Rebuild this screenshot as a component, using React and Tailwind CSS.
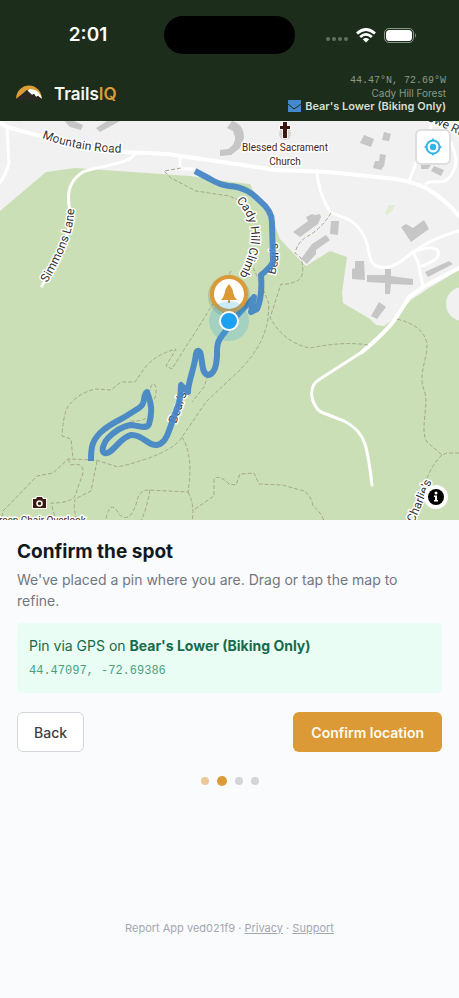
import React from 'react';

const forest = 'M0 211 L46 172 L75 168 L190 176 L232 182 L250 184 L256 196 L268 212 L275 226 L280 239 L294 254 L306 266 L330 251 L347 257 L342 293 L343 303 L370 319 L376 325 L384 326 L395 318 L411 300 L429 288 L459 270 V521 H0 Z';

const roads = [
    'M0 123 L7 127 L40 136 L80 146 L122 152 L167 154 L229 163 L276 170 L329 172 L396 179 Q420 183 434 193 Q448 203 459 216',
    'M459 268 L423 287 L409 297 L396 318 Q386 332 362 352',
];

const smallRoads = [
    'M317 171 C318 190 325 203 330 212 C340 217 349 217 357 226 C372 241 366 262 376 266 C388 271 398 264 412 253 C424 244 440 236 459 231',
    'M7 127 L9 163 Q6 174 0 183',
    'M180 157 V169 H193',
    'M409 181 L420 153 L432 125',
    'M426 184 C432 179 441 184 447 180 C452 175 456 167 456 160 Q454 143 441 128',
    'M413 252 L418 262 L423 287',
    'M413 252 C424 248 435 246 438 251 C441 258 432 262 422 266',
];

const lanes = [
    'M135 153 C132 164 97 166 83 172 C70 180 67 192 69 205 C75 230 60 253 42 286',
    'M396 318 Q386 332 362 352 L320 379 Q312 384 312 391 C310 399 317 410 321 412 L344 421 Q360 429 365 444 Q369 458 372 485',
];

const paths = [
    'M181 168 L164 171 L171 178 L196 191 L229 196 L241 201',
    'M205 174 L220 185 L235 188',
    'M331 213 Q321 229 308 236 Q298 241 295 253 L301 258 Q306 276 297 281 Q288 285 281 284 L270 318 L274 324 Q288 344 310 348 Q344 341 368 345',
    'M231 271 L216 299 L203 320 L187 345 L172 369 L166 366 L176 349 Q154 355 144 369 L135 382 L121 382 L111 390 L96 389 Q77 393 67 408 Q63 418 62 436 L71 439 L73 459',
    'M250 262 Q262 285 269 304 L268 318 Q264 350 229 380 L206 402 L182 437 Q172 454 118 467 L96 460 L68 459 L53 473 L37 476 L3 511 L1 521',
    'M68 459 L71 465 Q84 462 83 473 L75 496 Q71 503 51 503 L56 521',
    'M97 461 L91 491 L75 499 Q73 508 77 521',
    'M182 437 C193 455 190 478 188 492 L149 490 Q139 490 137 501 C132 520 124 520 119 514 Q110 498 106 519',
    'M188 492 Q195 505 192 521',
    'M150 490 Q147 508 141 521',
    'M195 509 L214 496 L214 479 Q219 474 229 484 L236 485 L240 474 L254 473 L259 484 L282 485 L304 491 Q311 495 313 506 Q321 512 324 521',
    'M149 394 Q152 378 156 387 Q157 398 151 403',
    'M150 414 Q146 422 129 421',
    'M208 375 L204 387 L192 402',
    'M397 319 Q425 326 427 345 C427 360 418 375 424 390 C430 403 419 430 427 442 L442 455 L447 453 L459 453',
    'M442 455 Q432 464 424 485 L407 521',
];

const trail = 'M195 171 L210 179 Q220 185 229 186 C245 187 253 194 260 201 Q272 211 272 222 L273 262 Q270 268 261 275 C262 288 261 300 257 309 L251 312 L254 297 C247 306 236 314 225 332 C216 342 217 347 217 356 Q216 374 208 375 C201 374 203 360 200 352 Q197 349 196 354 C194 370 188 382 188 392 L181 385 Q181 400 176 411 C170 426 168 440 160 444 C149 449 144 434 131 435 C120 437 112 455 105 453 C100 452 104 442 108 438 Q119 427 130 425 C138 425 147 430 149 424 C153 411 151 402 147 392 C142 395 147 403 139 408 L123 418 Q107 426 100 433 C91 442 91 450 91 461';

const buildings = [
    'M62 118 L74 121 L83 125 L81 130 L70 127 Z',
    'M96 128 L112 118 L120 121 L100 132 Z',
    'M364 135 L374 139 L371 147 L360 143 Z',
    'M384 132 L391 134 L389 141 L382 140 Z',
    'M380 154 L386 155 L384 166 L381 170 L373 168 L375 161 L379 161 Z',
    'M421 164 L428 161 L431 165 L428 169 L421 169 Z',
    'M434 166 L444 170 L441 176 L431 171 Z',
    'M293 232 L308 221 L306 217 L312 214 L315 215 L320 214 L321 217 L318 224 L300 237 Z',
    'M331 221 L339 221 L338 235 L330 234 Z',
    'M312 244 L326 235 L330 240 L316 250 L316 254 L307 264 L301 259 Z',
    'M401 227 L406 224 L413 228 L424 220 L429 229 L411 242 Z',
    'M355 261 L364 261 L365 280 L352 279 L352 269 L355 268 Z',
    'M367 275 L385 275 L385 269 L391 269 L391 276 L413 279 L413 285 L391 284 L390 294 L385 294 L385 283 L367 282 Z',
    'M379 302 L386 307 L377 319 L371 316 Z',
    'M425 272 L449 261 L453 264 L428 277 Z',
    'M232 121 Q244 124 244 138 L240 148 L231 155 L220 156 V150 L228 149 Q236 144 235 137 L233 131 L227 128 Z',
];

const halo = { stroke: '#fff', strokeWidth: 3, strokeLinejoin: 'round', paintOrder: 'stroke' };

const TrailMap = () => (
    <svg viewBox="0 121 459 399" preserveAspectRatio="xMidYMid slice" className="block w-full font-['Roboto','Noto_Sans',sans-serif]" role="img" aria-label="Trail map">
        <rect x="0" y="121" width="459" height="399" fill="#f1f1f1" />
        <path d={forest} fill="#cbdfb6" />
        <circle cx="463" cy="304" r="17" fill="#f1f1f1" />
        <path d="M385 213 L389 205 L395 205 L392 211 L387 215 Z" fill="#e0ecd0" />
        <g fill="#c6c6c6">
            {buildings.map(d => <path key={d} d={d} />)}
            <circle cx="285" cy="134" r="6" fill="#d8d3d3" />
        </g>
        <g fill="none" stroke="#fff" strokeLinecap="round" strokeLinejoin="round">
            {roads.map(d => <path key={d} d={d} strokeWidth="4" />)}
            {smallRoads.map(d => <path key={d} d={d} strokeWidth="3" />)}
            {lanes.map(d => <path key={d} d={d} strokeWidth="3" />)}
        </g>
        <g fill="none" stroke="#a3a88e" strokeWidth="1" strokeDasharray="4 2">
            {paths.map(d => <path key={d} d={d} />)}
        </g>

        <defs>
            <path id="mountain-road" d="M42 138 Q78 152 125 153" />
            <path id="simmons-lane" d="M47 283 Q77 233 74 203" />
            <path id="cady-hill" d="M236 201 Q266 230 237 280" />
            <path id="bears-north" d="M275 275 Q281 255 276 238" />
            <path id="bears-south" d="M176 424 Q183 405 189 387" />
            <path id="charlies" d="M414 523 L435 474" />
            <path id="stowe-road" d="M427 121 Q442 126 475 143" />
        </defs>
        <g fontSize="12" fill="#333" {...halo}>
            <text><textPath href="#mountain-road">Mountain Road</textPath></text>
            <text><textPath href="#simmons-lane">Simmons Lane</textPath></text>
            <text><textPath href="#cady-hill">Cady Hill Climb</textPath></text>
            <text><textPath href="#bears-north">Bear's</textPath></text>
            <text><textPath href="#bears-south">Bear's</textPath></text>
            <text><textPath href="#charlies">Charlie's</textPath></text>
            <text><textPath href="#stowe-road">owe Ra</textPath></text>
        </g>
        <path d={trail} fill="none" stroke="#4384c6" strokeOpacity="0.93" strokeWidth="6" strokeLinejoin="round" />

        <g fontSize="10" fill="#4a2414" textAnchor="middle" {...halo}>
            <text x="285" y="151">Blessed Sacrament</text>
            <text x="285" y="165">Church</text>
            <text x="39" y="524">Green Chair Overlook</text>
        </g>
        <path d="M283 122 H287 V126 H290 V129 H287 V138 H283 V129 H280 V126 H283 Z" fill="#3a1a0e" stroke="#fff" strokeWidth="1.5" paintOrder="stroke" />
        <path d="M33 499 H36 L37 497 H42 L43 499 H46 V508 H33 Z" fill="#3a1a0e" stroke="#fff" strokeWidth="2" paintOrder="stroke" />
        <circle cx="39.500" cy="503.500" r="2.500" fill="none" stroke="#fff" strokeWidth="1.500" />

        {/* report pin */}
        <circle cx="229" cy="296" r="21" fill="#315438" opacity="0.18" />
        <path d="M222 310 H236 L229 332 Z" fill="#8a8a5a" />
        <circle cx="229" cy="294" r="17" fill="#fff" stroke="#db9a35" strokeWidth="4" />
        <path d="M229 284 Q233 289 233 292 Q234 297 237 300 H230 V303 H228 V300 H221 Q224 297 225 292 Q225 289 229 284 Z" fill="#db9a35" />

        {/* GPS position */}
        <circle cx="229" cy="321" r="20" fill="#3aa9de" opacity="0.26" />
        <circle cx="229" cy="321" r="9" fill="#1da1f2" stroke="#fff" strokeWidth="2" />
    </svg>
);

const StatusBar = () => (
    <div className="flex items-center pt-4">
        <div className="flex-1 pl-3 text-center text-[19px] leading-6 font-semibold text-white">2:01</div>
        <div className="h-[38px] w-[131px] rounded-full bg-black" />
        <div className="flex flex-1 items-center justify-center gap-2 pr-3">
            <div className="flex gap-[2px] pt-2">
                <span className="size-1 rounded-full bg-[#637060]" />
                <span className="size-1 rounded-full bg-[#637060]" />
                <span className="size-1 rounded-full bg-[#637060]" />
                <span className="size-1 rounded-full bg-[#637060]" />
            </div>
            <svg width="20" height="15" viewBox="0 0 20 15" fill="none" stroke="#fff" strokeWidth="2.8">
                <path d="M1 5.500 Q10 -2.500 19 5.500" />
                <path d="M4.200 9 Q10 3.800 15.800 9" />
                <path d="M10 14.500 L6.800 11.200 Q10 8.600 13.200 11.200 Z" fill="#fff" stroke="none" />
            </svg>
            <svg width="33" height="15" viewBox="0 0 33 15">
                <rect x="0.500" y="0.500" width="29" height="14" rx="4.500" fill="none" stroke="#8c978b" />
                <rect x="2" y="2" width="26" height="11" rx="3.500" fill="#fff" />
                <path d="M31 5 Q33 7.500 31 10 Z" fill="#8c978b" />
            </svg>
        </div>
    </div>
);

const Header = () => (
    <header className="bg-[#1c2e1b] pb-2">
        <StatusBar />
        <div className="flex items-center justify-between pt-5 pr-[13px] pl-4">
            <div className="flex items-center gap-3">
                <svg width="26" height="18" viewBox="0 0 26 18" aria-hidden="true">
                    <path d="M0 14 C1 -4 25 -4 26 14 L22 11 L18 8 L11 5 L6 10 Z" fill="#dd9c36" />
                    <path d="M11 6 L14 4 L19 5 Q24 7 26 14 L22 11 L20 12 L18 9 L16 10 Z" fill="#fff" />
                    <path d="M0 14 L11 5 L16 10 L18 9 L20 12 L22 11 L26 14 Q13 17 0 14 Z" fill="#2b2923" />
                </svg>
                <h1 className="text-[17px] leading-6 font-semibold text-[#f6f8f2]">Trails<span className="text-[#dd9c36]">IQ</span></h1>
            </div>
            <div className="text-right text-[#8b9887]">
                <p className="font-['Liberation_Mono',monospace] text-[10px] leading-[13px]">44.47°N, 72.69°W</p>
                <p className="text-[10px] leading-3">Cady Hill Forest</p>
                <div className="flex items-center justify-end gap-1 text-[11px] leading-[14px] font-semibold text-[#d6ddd3]">
                    <svg width="13" height="12" viewBox="0 0 13 12" aria-hidden="true">
                        <rect width="13" height="12" fill="#4488ce" />
                        <path d="M0 4 L6 9 L9 7 L13 4" fill="none" stroke="#1c2e1b" />
                    </svg>
                    <span>Bear's Lower (Biking Only)</span>
                </div>
            </div>
        </div>
    </header>
);

const MapPanel = () => (
    <div className="relative">
        <TrailMap />
        <button type="button" aria-label="Find my location" className="absolute top-2 right-2 flex size-9 items-center justify-center rounded-md border-2 border-[#dedede] bg-white">
            <svg width="20" height="20" viewBox="0 0 20 20" fill="none" stroke="#33b5e5" strokeWidth="2">
                <circle cx="10" cy="10" r="6.500" />
                <circle cx="10" cy="10" r="3.200" fill="#33b5e5" stroke="none" />
                <path d="M8 4 L10 1 L12 4 M8 16 L10 19 L12 16 M4 8 L1 10 L4 12 M16 8 L19 10 L16 12" fill="#33b5e5" stroke="none" />
            </svg>
        </button>
        <button type="button" aria-label="Map attribution" className="absolute right-[11px] bottom-[11px] flex size-6 items-center justify-center rounded-full bg-white">
            <svg width="16" height="16" viewBox="0 0 16 16">
                <circle cx="8" cy="8" r="8" fill="#000" />
                <circle cx="8" cy="4" r="1.500" fill="#fff" />
                <path d="M6 6.500 H9 V11 H10 V12.500 H6 V11 H7 V8 H6 Z" fill="#fff" />
            </svg>
        </button>
    </div>
);

const App = () => (
    <div className="flex min-h-screen flex-col bg-[#fafbfd] font-['Inter','Open_Sans',sans-serif]">
        <Header />
        <MapPanel />
        <main className="px-[17px] pt-5">
            <h2 className="text-[19px] leading-6 font-bold text-[#111820]">Confirm the spot</h2>
            <p className="mt-[5px] text-[14px] leading-[21px] text-[#737780]">We've placed a pin where you are. Drag or tap the map to refine.</p>
            <div className="mt-3 rounded bg-[#eafdf5] px-3 py-3 text-[#166b4b]">
                <p className="text-[14px] leading-[22px]">Pin via GPS on <strong className="font-bold">Bear's Lower (Biking Only)</strong></p>
                <p className="mt-1 font-['Liberation_Mono',monospace] text-[12px] leading-5 text-[#4b9f80]">44.47097, -72.69386</p>
            </div>
            <div className="mt-[19px] flex justify-between">
                <button type="button" className="h-10 rounded-md border border-[#d3d5da] bg-white px-4 text-[14px] font-medium text-[#3c4048]">Back</button>
                <button type="button" className="h-10 rounded-md bg-[#db9a35] px-[18px] text-[14px] font-semibold text-[#fffaf0]">Confirm location</button>
            </div>
            <div className="mt-6 flex items-center justify-center gap-2">
                <span className="size-2 rounded-full bg-[#ebc898]" />
                <span className="size-[10px] rounded-full bg-[#db9a35]" />
                <span className="size-2 rounded-full bg-[#d3d5d9]" />
                <span className="size-2 rounded-full bg-[#d3d5d9]" />
            </div>
        </main>
        <footer className="mt-auto pb-[62px] text-center text-[11px] leading-4 text-[#a3a7af]">
            Report App ved021f9 · <a href="#privacy" className="underline">Privacy</a> · <a href="#support" className="underline">Support</a>
        </footer>
    </div>
);
export default App;
